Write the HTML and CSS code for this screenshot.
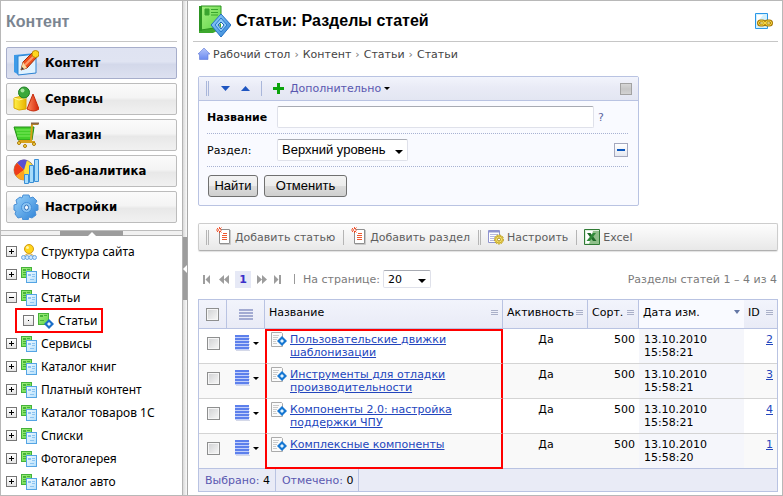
FILE: index.html
```html
<!DOCTYPE html>
<html lang="ru">
<head>
<meta charset="utf-8">
<title>Статьи: Разделы статей</title>
<link rel="stylesheet" href="styles.css">
</head>
<body>
<svg class="defs" aria-hidden="true">
  <defs>
    <linearGradient id="gGreen" x1="0" y1="0" x2="1" y2="1"><stop offset="0" stop-color="#a4ef7e"/><stop offset="1" stop-color="#5fd64a"/></linearGradient>
    <linearGradient id="gBlue" x1="0" y1="0" x2="1" y2="1"><stop offset="0" stop-color="#f2faff"/><stop offset="1" stop-color="#b4dffb"/></linearGradient>
    <linearGradient id="gSky" x1="0" y1="0" x2="1" y2="1"><stop offset="0" stop-color="#9bd4fb"/><stop offset="1" stop-color="#2b80d6"/></linearGradient>
    <linearGradient id="gHouse" x1="0" y1="0" x2="0" y2="1"><stop offset="0" stop-color="#b3c4fa"/><stop offset="1" stop-color="#6b8af0"/></linearGradient>
    <linearGradient id="gYellow" x1="0" y1="0" x2="1" y2="0"><stop offset="0" stop-color="#fff04a"/><stop offset="1" stop-color="#e8b400"/></linearGradient>
    <linearGradient id="gRed" x1="0" y1="0" x2="1" y2="0"><stop offset="0" stop-color="#ff8a5c"/><stop offset="1" stop-color="#d32408"/></linearGradient>
  </defs>
  <symbol id="pages" viewBox="0 0 16 16">
    <rect x=".5" y=".5" width="10" height="10" fill="url(#gGreen)" stroke="#45b23a"/>
    <path d="M2 2.500h3M2 3.500h3M6 2.500h3M2 5.500h3M2 7.500h3" stroke="#45b23a"/>
    <rect x="5.500" y="4.500" width="10" height="11" fill="url(#gBlue)" stroke="#55a5e4"/>
    <path d="M7 7.500h3M7 8.500h3M11 7.500h3M11 9.500h3M9 12.500h4" stroke="#8cc4f2"/>
  </symbol>
  <symbol id="page-gem" viewBox="0 0 16 16">
    <rect x=".5" y=".5" width="10" height="11" fill="url(#gGreen)" stroke="#45b23a"/>
    <path d="M2 2.500h3M2 3.500h3M6 2.500h3M2 7.500h4" stroke="#45b23a"/>
    <path d="M11 6l5 5-5 5-5-5z" fill="#1b6fc8"/><path d="M11 9l2 2-2 2-2-2z" fill="#e8f6ff"/>
  </symbol>
  <symbol id="doc-gem" viewBox="0 0 16 16">
    <path d="M.5 .5h10l1 1V14.500H.5z" fill="#fbfbfb" stroke="#ababab"/>
    <path d="M2 3.500h6M2 5.500h5M2 7.500h4M2 9.500h3M2 11.500h4" stroke="#cbcbcb"/>
    <path d="M11 4l5 5-5 5-5-5z" fill="#1677d2"/><path d="M11 7l2 2-2 2-2-2z" fill="#e2f4ff"/>
  </symbol>
  <symbol id="sitemap" viewBox="0 0 16 16">
    <circle cx="8" cy="5" r="4.500" fill="#ffd51c" stroke="#d39a10"/><circle cx="6.500" cy="3.500" r="1.500" fill="#fff6a8"/>
    <path d="M3 12l3-2h4l3 2" fill="none" stroke="#d9a838"/>
    <g fill="#cfe8ff" stroke="#6aa5e2"><circle cx="2.500" cy="13.500" r="2"/><circle cx="6.200" cy="13.500" r="2"/><circle cx="9.900" cy="13.500" r="2"/><circle cx="13.500" cy="13.500" r="2"/></g>
  </symbol>
  <symbol id="add-doc" viewBox="0 0 16 18">
    <path d="M3.500 2.500h10v14h-10z" fill="#fff" stroke="#8f8f8f"/><path d="M14.500 3v14.500H4" fill="none" stroke="#c9c9c9"/>
    <path d="M7 6.500h4M6 8.500h5M6 10.500h5M6 12.500h5" stroke="#f0582f"/>
    <path d="M3.500 0v6M0 3h6M1 1l4.500 4.500M5.500 .5L1 5" stroke="#f0431a" stroke-width=".9"/><circle cx="3.500" cy="3" r="1" fill="#fff"/>
  </symbol>
  <symbol id="menu" viewBox="0 0 15 16">
    <path d="M1 3.500h14M1 6.500h14M1 9.500h14M1 12.500h14M1 15.500h14" stroke="#d4d8e8"/>
    <path d="M0 1h14M0 4h14M0 7h14M0 10h14M0 13h14" stroke="currentColor" stroke-width="2"/>
    <path d="M0 2.500h14M0 5.500h14M0 8.500h14M0 11.500h14M0 14.500h14" stroke="#c3d0fa"/>
  </symbol>
  <symbol id="menu-off" viewBox="0 0 14 11">
    <path d="M0 1h14M0 4h14M0 7h14M0 10h14" stroke="#a3abd2" stroke-width="2"/>
  </symbol>
</svg>

<div class="app">
  <aside class="side">
    <h2 class="side-title">Контент</h2>
    <nav class="sections">
      <button class="section current"><svg class="i26" viewBox="0 0 26 26"><path d="M1 5l22-2v20l-17 2-5-3z" fill="#3d9be8"/><path d="M5 6l18-2v19L5 25z" fill="#dff2ff" stroke="#2f83d2"/><path d="M8 20l2-8L19 3l5 4-10 11z" fill="#f0501c" stroke="#9f2c0a"/><path d="M12 15l9-9" stroke="#ff9b6b" stroke-width="2"/><path d="M8 20l2-8 4 6z" fill="#f8d9a0"/><path d="M8 20l1-3 2 2z" fill="#333"/><circle cx="22.500" cy="4" r="3.500" fill="#ffd61e" stroke="#b98a04"/></svg>Контент</button>
      <button class="section"><svg class="i26" viewBox="0 0 26 26"><path d="M1 12l6-1.500 6 1.500v11l-7 1-5-2z" fill="url(#gYellow)" stroke="#d8a800"/><path d="M1 12l5 2 7-2" fill="none" stroke="#fff9a0"/><circle cx="11" cy="6.500" r="5.500" fill="#3aa83a" stroke="#1f7f24"/><circle cx="9.500" cy="4.500" r="2" fill="#a5e39c"/><path d="M20 8l6 15q-5 4-12 0z" fill="url(#gRed)" stroke="#c62b0c"/></svg>Сервисы</button>
      <button class="section"><svg class="i26" viewBox="0 0 26 26"><path d="M1 5h20l-2 13H5z" fill="#43cf2a" stroke="#238e16"/><path d="M3 8h17M4 11h15M4 14h15" stroke="#7eea5f"/><path d="M25 2h-6l-1 17H6" fill="none" stroke="#d79e16" stroke-width="2"/><path d="M18 1.500h8" stroke="#8a6540" stroke-width="2"/><path d="M6 20h16" stroke="#d8a21c" stroke-width="2"/><g fill="#ffe04a" stroke="#a8760c"><circle cx="12" cy="24" r="1.500"/><circle cx="21" cy="22" r="1.500"/><circle cx="6" cy="21" r="1.500"/></g></svg>Магазин</button>
      <button class="section"><svg class="i26" viewBox="0 0 26 26"><circle cx="11" cy="12" r="10" fill="#ffe03a" stroke="#a08970"/><path d="M11 12L4 5A10 10 0 0 1 14 2z" fill="#5a4fd0"/><path d="M11 12L4 5A10 10 0 0 0 3 18z" fill="#ef3c1a"/><path d="M11 12l-8 6a10 10 0 0 0 9 4z" fill="#ffa51e"/><path d="M11.500 16.500h4v9h-4zM16.500 7.500h4v17h-4zM21.500 1.500h4v22h-4z" fill="#a7dcfb" stroke="#3a8fd6"/></svg>Веб-аналитика</button>
      <button class="section"><svg class="i26" viewBox="0 0 26 26"><path d="M10 1h6l1 3 3-1 4 4-2 3 3 1v5l-3 1 1 4-4 3-3-1-1 3h-5l-1-3-4 1-3-4 1-3-2-1v-5l3-1-1-4 4-3 2 1z" fill="url(#gSky)" stroke="#4a90d6"/><circle cx="13.500" cy="13.500" r="5" fill="#8cc6f5" stroke="#4690da"/><ellipse cx="13.500" cy="13.500" rx="2" ry="2.500" fill="#f4f9ff" stroke="#3372b8"/></svg>Настройки</button>
    </nav>
    <div class="hsplit"><button class="hgrip" aria-label="Свернуть меню"><svg viewBox="0 0 8 4"><path d="M4 0l4 4H0z" fill="#fff"/></svg></button></div>
    <ul class="tree">
      <li><button class="exp plus-box" aria-label="Развернуть"></button><svg class="i16"><use href="#sitemap"/></svg><a href="#">Структура сайта</a></li>
      <li><button class="exp plus-box" aria-label="Развернуть"></button><svg class="i16"><use href="#pages"/></svg><a href="#">Новости</a></li>
      <li><button class="exp" aria-label="Свернуть"></button><svg class="i16"><use href="#pages"/></svg><a href="#">Статьи</a></li>
      <li class="marked"><button class="exp leaf" aria-label="Нет вложенных"></button><svg class="i16"><use href="#page-gem"/></svg><a href="#">Статьи</a></li>
      <li><button class="exp plus-box" aria-label="Развернуть"></button><svg class="i16"><use href="#pages"/></svg><a href="#">Сервисы</a></li>
      <li><button class="exp plus-box" aria-label="Развернуть"></button><svg class="i16"><use href="#pages"/></svg><a href="#">Каталог книг</a></li>
      <li><button class="exp plus-box" aria-label="Развернуть"></button><svg class="i16"><use href="#pages"/></svg><a href="#">Платный контент</a></li>
      <li><button class="exp plus-box" aria-label="Развернуть"></button><svg class="i16"><use href="#pages"/></svg><a href="#">Каталог товаров 1С</a></li>
      <li><button class="exp plus-box" aria-label="Развернуть"></button><svg class="i16"><use href="#pages"/></svg><a href="#">Списки</a></li>
      <li><button class="exp plus-box" aria-label="Развернуть"></button><svg class="i16"><use href="#pages"/></svg><a href="#">Фотогалерея</a></li>
      <li><button class="exp plus-box" aria-label="Развернуть"></button><svg class="i16"><use href="#pages"/></svg><a href="#">Каталог авто</a></li>
    </ul>
  </aside>

  <div class="vsplit"><button class="vgrip" aria-label="Скрыть панель"><svg viewBox="0 0 4 8"><path d="M4 0v8L0 4z" fill="#fff"/></svg></button></div>

  <main class="main">
    <header class="head">
      <svg class="i32" viewBox="0 0 32 32"><path d="M0 1h22v23l-8 4H0z" fill="#3da82e"/><path d="M2 1h20v21l-20 3z" fill="url(#gGreen)" stroke="#2c9421"/><path d="M0 1h3v25H0z" fill="#2c9421"/><path d="M6 4h4v6H6zM12 4.500h7M12 7.500h7M12 10h7" fill="#3aa52e" stroke="#3aa52e"/><path d="M22 9l10 11-10 12-10-12z" fill="url(#gSky)" stroke="#2270c4"/><path d="M22 13l6 7-6 7-6-7z" fill="#8fccfa" stroke="#2a78cc"/><path d="M22 17l3 3-3 4-3-4z" fill="#fff" stroke="#1f64b4"/><path d="M20 20l2-2v5z" fill="#37a52d"/></svg>
      <h1 class="title">Статьи: Разделы статей</h1>
      <a class="link-icon" href="#" aria-label="Ссылка на страницу"><svg class="i18" viewBox="0 0 18 18"><path d="M.5 1.500h12v15H.5z" fill="#d3f1fd" stroke="#2a97e8"/><path d="M2 3h6l-6 8z" fill="#fff"/><g fill="none" stroke="#a77806" stroke-width="3"><rect x="3.500" y="9" width="6" height="4" rx="2"/><rect x="10.500" y="9" width="6" height="4" rx="2"/></g><g fill="none" stroke="#ffe04a"><rect x="3.500" y="9" width="6" height="4" rx="2"/><rect x="10.500" y="9" width="6" height="4" rx="2"/><path d="M6 11h8"/></g></svg></a>
    </header>

    <nav class="crumbs">
      <svg class="home" viewBox="0 0 12 12"><path d="M6 0l6 6H10v5.500H1.500V6H0z" fill="url(#gHouse)" stroke="#5f78d6" stroke-width=".6"/></svg>
      <a href="#">Рабочий стол</a><span class="sep">›</span><a href="#">Контент</a><span class="sep">›</span><a href="#">Статьи</a><span class="sep">›</span><a href="#">Статьи</a>
    </nav>

    <form class="filter">
      <div class="filter-bar">
        <span class="grip"></span>
        <button type="button" class="bare down" aria-label="Вниз"><svg viewBox="0 0 9 5"><path d="M0 0h9L4.500 5z" fill="#1e55c0"/></svg></button>
        <button type="button" class="bare up" aria-label="Вверх"><svg viewBox="0 0 9 5"><path d="M0 5h9L4.500 0z" fill="#1e55c0"/></svg></button>
        <span class="bar"></span>
        <button type="button" class="bare more"><svg class="plus" viewBox="0 0 11 11"><path d="M4 0h3v4h4v3H7v4H4V7H0V4h4z" fill="#0ba30b"/></svg>Дополнительно<i class="caret"></i></button>
        <button type="button" class="square" aria-label="Свернуть фильтр"></button>
      </div>
      <div class="filter-body">
        <div class="field">
          <label class="label strong" for="name">Название</label>
          <input class="text" id="name" type="text"><a class="hint" href="#">?</a>
        </div>
        <div class="field">
          <label class="label" for="sec">Раздел:</label>
          <span class="pick wide"><select id="sec"><option>Верхний уровень</option></select></span>
          <button type="button" class="minus" aria-label="Убрать условие"></button>
        </div>
        <div class="actions"><button type="submit" class="btn find">Найти</button><button type="reset" class="btn cancel">Отменить</button></div>
      </div>
    </form>

    <div class="toolbar">
      <span class="grip gray"></span>
      <button class="bare tool"><svg class="add"><use href="#add-doc"/></svg>Добавить статью</button>
      <span class="bar gray"></span>
      <button class="bare tool"><svg class="add"><use href="#add-doc"/></svg>Добавить раздел</button>
      <span class="grip gray"></span>
      <button class="bare tool"><svg class="i16" viewBox="0 0 16 16"><path d="M.5 1.500h11v12H.5z" fill="#fff" stroke="#8f94cf"/><path d="M1 2.500h10" stroke="#8f94cf" stroke-width="2"/><path d="M2 5.500h8M2 7.500h8M2 9.500h6M2 11.500h5" stroke="#b6b9e0"/><circle cx="11" cy="10.500" r="4.500" fill="#f6e36a" stroke="#b29320" stroke-dasharray="2 1"/><circle cx="11" cy="10.500" r="3.500" fill="#f6e36a" stroke="#c9ab30"/><circle cx="11" cy="10.500" r="1.500" fill="#fff" stroke="#a8881c"/></svg>Настроить</button>
      <span class="bar gray"></span>
      <button class="bare tool"><svg class="i16" viewBox="0 0 16 16"><path d="M.5.500h15v15H.5z" fill="#dcefdc" stroke="#2f7a34"/><path d="M2 2h12v12H2z" fill="#fff"/><path d="M9 2h6v13H5z" fill="#8fbf8a"/><path d="M3 4h3.500l6 8H9z" fill="#1f6b28"/><path d="M12 4H9l-6.500 8H6z" fill="#2f8a38"/></svg>Excel</button>
    </div>

    <div class="pager">
      <svg class="pg" viewBox="0 0 8 9"><path d="M0 0h2v9H0zM7 0v9L2.500 4.500z"/></svg>
      <svg class="pg two" viewBox="0 0 10 9"><path d="M5 0v9L0 4.500zM10 0v9L5 4.500z"/></svg>
      <b class="now">1</b>
      <svg class="pg two" viewBox="0 0 10 9"><path d="M5 0v9l5-4.500zM0 0v9l5-4.500z"/></svg>
      <svg class="pg" viewBox="0 0 8 9"><path d="M6 0h2v9H6zM1 0v9l4.500-4.500z"/></svg>
      <span class="pipe"></span>
      <label for="per">На странице:</label>
      <span class="pick small"><select id="per"><option>20</option></select></span>
      <span class="total">Разделы статей 1 – 4 из 4</span>
    </div>

    <table class="grid">
      <colgroup><col class="c1"><col class="c2"><col><col class="c4"><col class="c5"><col class="c6"><col class="c7"></colgroup>
      <thead>
        <tr>
          <th class="mid"><input type="checkbox" aria-label="Выбрать все"></th>
          <th class="mid"><svg class="dim"><use href="#menu-off"/></svg></th>
          <th><div class="th">Название<i class="lines"></i></div></th>
          <th><div class="th">Активность<i class="lines"></i></div></th>
          <th><div class="th">Сорт.<i class="lines"></i></div></th>
          <th class="sorted"><div class="th">Дата изм.<i class="desc"></i></div></th>
          <th class="id"><div class="th">ID<i class="lines"></i></div></th>
        </tr>
      </thead>
      <tbody>
        <tr><td class="mid"><input type="checkbox" aria-label="Строка 2"></td><td><button class="bare acts" aria-label="Действия"><svg class="menu"><use href="#menu"/></svg><i class="caret"></i></button></td><td class="name"><div class="item"><svg class="i16"><use href="#doc-gem"/></svg><a href="#">Пользовательские движки шаблонизации</a></div></td><td class="yes">Да</td><td class="num">500</td><td class="date">13.10.2010 15:58:21</td><td class="num"><a href="#">2</a></td></tr>
        <tr><td class="mid"><input type="checkbox" aria-label="Строка 3"></td><td><button class="bare acts" aria-label="Действия"><svg class="menu"><use href="#menu"/></svg><i class="caret"></i></button></td><td class="name"><div class="item"><svg class="i16"><use href="#doc-gem"/></svg><a href="#">Инструменты для отладки производительности</a></div></td><td class="yes">Да</td><td class="num">500</td><td class="date">13.10.2010 15:58:21</td><td class="num"><a href="#">3</a></td></tr>
        <tr><td class="mid"><input type="checkbox" aria-label="Строка 4"></td><td><button class="bare acts" aria-label="Действия"><svg class="menu"><use href="#menu"/></svg><i class="caret"></i></button></td><td class="name"><div class="item"><svg class="i16"><use href="#doc-gem"/></svg><a href="#">Компоненты 2.0: настройка поддержки ЧПУ</a></div></td><td class="yes">Да</td><td class="num">500</td><td class="date">13.10.2010 15:58:21</td><td class="num"><a href="#">4</a></td></tr>
        <tr><td class="mid"><input type="checkbox" aria-label="Строка 1"></td><td><button class="bare acts" aria-label="Действия"><svg class="menu"><use href="#menu"/></svg><i class="caret"></i></button></td><td class="name"><div class="item"><svg class="i16"><use href="#doc-gem"/></svg><a href="#">Комплексные компоненты</a></div></td><td class="yes">Да</td><td class="num">500</td><td class="date">13.10.2010 15:58:20</td><td class="num"><a href="#">1</a></td></tr>
      </tbody>
      <tfoot>
        <tr><td colspan="7"><div class="sums"><span>Выбрано: <b>4</b></span><span>Отмечено: <b>0</b></span></div></td></tr>
      </tfoot>
    </table>
  </main>
</div>
</body>
</html>
```
FILE: styles.css
```css
* { box-sizing: border-box; }
body { margin: 0; background: #fff; color: #000; font: 11px/13px "DejaVu Sans", Verdana, sans-serif; }
h1, h2, ul { margin: 0; padding: 0; }
button, input, select { font: inherit; color: inherit; margin: 0; padding: 0; border-radius: 0; }
svg { display: block; flex: none; }
.defs { position: absolute; width: 0; height: 0; }
.i16 { width: 16px; height: 16px; }
.i18 { width: 18px; height: 18px; }
.i26 { width: 26px; height: 26px; }
.i32 { width: 32px; height: 32px; }

.app { display: grid; grid-template-columns: 181px 6px minmax(0, 1fr); min-height: 100vh; border: 1px solid #b8b8b8; }

/* Sidebar */
.side { min-width: 0; }
.side-title { height: 41px; margin: 0 5px; padding-top: 11px; border-bottom: 1px solid #c6c6c6; font: bold 16px/20px "Liberation Sans", Arial, sans-serif; color: #7b8591; }
.sections { display: grid; gap: 4px; padding: 5px 5px 7px 5px; }
.section { display: flex; align-items: center; gap: 6px; height: 32px; padding: 0 6px; border: 1px solid #bcbcbc; border-radius: 2px; background: linear-gradient(#fbfbfb, #f4f4f4 45%, #e8e8e8 55%, #f1f1f1); font: bold 13px/16px "DejaVu Sans Condensed", Tahoma, sans-serif; text-align: left; }
.section.current { border-color: #a7aecb; background: linear-gradient(#dfe3f2, #e0e4f2 45%, #d3d8ea 55%, #dde1f0); }
.hsplit { height: 6px; border-top: 1px solid #bdbdbd; border-bottom: 1px solid #b0b0b0; background: #f1f1f1; display: flex; justify-content: center; }
.hgrip { display: flex; justify-content: center; align-items: center; width: 63px; height: 5px; border: 0; background: #9d9d9d; }
.hgrip svg { width: 8px; height: 4px; }
.tree { list-style: none; padding-top: 4px; }
.tree li { display: flex; align-items: center; height: 23px; padding-left: 5px; font: 12px/16px "Noto Sans", Tahoma, sans-serif; }
.tree a { color: #000; text-decoration: none; margin-left: 4px; white-space: nowrap; }
.tree .marked { width: 88px; height: 25px; margin: -1px 0 -1px 14px; padding-left: 6px; border: 2px solid #f00; }
.exp {
  width: 11px; height: 11px; margin-right: 4px; border: 1px solid #767676;
  background: linear-gradient(#000, #000) center / 5px 1px no-repeat, linear-gradient(#fff, #e4e4e4);
}
.plus-box { background: linear-gradient(#000, #000) center / 5px 1px no-repeat, linear-gradient(#000, #000) center / 1px 5px no-repeat, linear-gradient(#fff, #e4e4e4); }
.leaf { background: linear-gradient(#000, #000) center / 1px 1px no-repeat, linear-gradient(#fff, #e4e4e4); }

.vsplit { display: flex; align-items: flex-start; padding-top: 236px; border-left: 1px solid #b4b4b4; border-right: 1px solid #a9a9a9; background: linear-gradient(90deg, #d9d9d9, #fafafa); }
.vgrip { display: flex; align-items: center; justify-content: center; width: 6px; height: 63px; border: 0; background: #9d9d9d; }
.vgrip svg { width: 4px; height: 8px; }

/* Main area */
.main { padding: 0 4px 3px 5px; min-width: 0; }
.head { display: flex; align-items: center; gap: 5px; height: 41px; padding: 0 5px 1px 6px; border-bottom: 1px solid #c6c6c6; }
.title { flex: 1; font: bold 16px/20px "Liberation Sans", Arial, sans-serif; }
.crumbs { display: flex; align-items: center; height: 24px; padding-left: 5px; }
.crumbs a { color: #444; text-decoration: none; }
.home { width: 12px; height: 12px; margin-right: 3px; }
.sep { margin: 0 4px; color: #777; }

.bare { border: 0; background: none; }
.grip { width: 3px; height: 15px; border: solid #a9b6da; border-width: 0 1px; }
.bar { width: 1px; height: 15px; background: #a9b6da; }
.grip.gray { border-color: #b5b5b5; }
.bar.gray { background: #b5b5b5; }
.caret { display: inline-block; flex: none; border: solid transparent; border-width: 3px 3px 0; border-top-color: #000; }

.filter { max-width: 441px; margin: 10px 0 0 5px; border: 1px solid #b9c3e2; border-radius: 2px; background: #f9faff; }
.filter-bar { display: flex; align-items: center; height: 24px; padding: 0 6px 0 7px; border-bottom: 1px solid #b9c3e2; background: linear-gradient(#f2f4fc, #e9ebf6 45%, #e3e6f2); }
.down, .up { display: flex; }
.down { margin-left: 12px; }
.up { margin: 0 11px; }
.down svg, .up svg { width: 9px; height: 5px; }
.more { display: flex; align-items: center; margin-left: 11px; color: #5a58b0; }
.more .caret { margin-left: 3px; }
.plus { width: 11px; height: 11px; margin-right: 6px; }
.square { width: 12px; height: 12px; margin-left: auto; border: 1px solid #a2a2a2; background: linear-gradient(#d6d6d6, #c6c6c6 50%, #d2d2d2); }
.filter-body { padding: 0 10px 8px 8px; }
.field { display: flex; align-items: center; height: 33px; border-bottom: 1px dotted #a8b2d2; }
.label { width: 70px; flex: none; }
.label.strong { font-weight: bold; }
.text, .pick select { border: 1px solid #dfe1ea; border-top-color: #a8abb3; background: #fff; }
.text { flex: 1; min-width: 0; max-width: 317px; height: 22px; padding: 0 4px; border-radius: 2px; }
.hint { margin-left: 4px; color: #5f66a0; text-decoration: none; }
.pick { position: relative; display: block; }
.pick select { display: block; width: 100%; height: 100%; appearance: none; border-radius: 2px; }
.pick::after { content: ""; position: absolute; right: 5px; top: 50%; border: solid transparent; border-width: 4px 4px 0; border-top-color: #000; pointer-events: none; }
.wide { width: 131px; height: 22px; font: 13px/18px "Liberation Sans", Arial, sans-serif; }
.wide select { padding-left: 4px; }
.minus { display: flex; align-items: center; justify-content: center; width: 14px; height: 14px; margin-left: auto; border: 1px solid #a5a8bd; background: linear-gradient(#fff, #e6e8f0); }
.minus::before { content: ""; width: 8px; height: 2px; background: #0b56bd; }
.actions { display: flex; gap: 6px; padding-top: 8px; margin-left: 1px; }
.btn { height: 22px; border: 1px solid #707070; border-radius: 3px; background: linear-gradient(#f3f3f3, #ececec 49%, #dcdcdc 50%, #cfcfcf); font: 13px/18px "Liberation Sans", Arial, sans-serif; }
.find { width: 50px; }
.cancel { width: 83px; }

.toolbar { display: flex; align-items: center; height: 28px; margin: 17px 0 0 5px; padding-left: 7px; border: 1px solid #cdcdcd; border-bottom-color: #b0b0b0; border-radius: 2px; box-shadow: 0 1px 1px #e2e2e2; background: linear-gradient(#fdfdfd, #f4f4f4 45%, #e8e8e8); color: #5e5e5e; }
.tool { display: flex; align-items: center; gap: 3px; margin: 0 8px 0 7px; white-space: nowrap; }
.add { width: 16px; height: 18px; margin-top: -2px; }

.pager { display: flex; align-items: center; height: 20px; margin: 18px 1px 10px 10px; color: #7b7b7b; }
.pg { width: 8px; height: 9px; fill: #9d9d9d; margin-right: 8px; }
.pg.two { width: 10px; margin-right: 6px; }
.now { width: 16px; height: 17px; margin-right: 6px; background: #e6e9f6; color: #3b2fc9; text-align: center; line-height: 17px; }
.pipe { width: 1px; height: 10px; margin: 0 8px 0 5px; background: #999; }
.small { width: 48px; height: 18px; margin-left: 3px; color: #000; }
.small select { padding-left: 4px; }
.total { margin-left: auto; }

/* Table */
.grid { width: calc(100% - 5px); margin-left: 5px; table-layout: fixed; border-collapse: separate; border-spacing: 0; border: 1px solid #b9c3e2; }
.c1 { width: 28px; } .c2 { width: 38px; } .c4 { width: 85px; } .c5 { width: 51px; } .c6 { width: 105px; } .c7 { width: 33px; }
.grid th { height: 29px; padding: 0 4px; border-right: 1px solid #b9c3e2; border-bottom: 1px solid #b9c3e2; background: linear-gradient(#f2f4fc, #e9ebf6); font-weight: normal; text-align: left; }
.grid th:last-child, .grid th.sorted { border-right: 0; }
.grid th.sorted { background: #f9faff; }
.th { display: flex; align-items: center; justify-content: space-between; height: 14px; margin-bottom: 4px; white-space: nowrap; }
.lines { width: 7px; height: 5px; border: solid #aab0c8; border-width: 1px 0; background: linear-gradient(#aab0c8, #aab0c8) 0 1px / 7px 1px no-repeat; }
.desc { border: solid transparent; border-width: 4px 3px 0; border-top-color: #6477a5; }
.grid .mid { padding: 0; vertical-align: middle; text-align: center; }
.grid input { display: block; appearance: none; width: 13px; height: 13px; margin: 0 auto; border: 1px solid #8e8f8f; outline: 1px solid #f6f6f6; outline-offset: -2px; background: linear-gradient(135deg, #cfd0d2, #f8f8f8); }
.grid td { height: 35px; padding: 4px 4px 0 5px; border-bottom: 1px solid #d4d4d4; vertical-align: top; }
.grid tbody td.mid { padding: 0; vertical-align: top; }
.grid td.mid input { margin-top: 8px; }
.grid tbody tr:nth-child(even) td { background: #f9f9f9; }
.grid tbody tr:last-child td { border-bottom-color: #b9c3e2; }
.grid tbody tr:nth-child(n) td.date { background: #f5f6fb; }
.menu { width: 15px; height: 16px; color: #5d80ec; }
.dim { width: 14px; height: 11px; margin: 0 auto; }
.acts { display: flex; align-items: center; gap: 3px; margin: 2px 0 0 3px; }
.grid tbody td.name { padding: 3px 3px 0 4px; border-left: 2px solid #f00; border-right: 2px solid #f00; }
.grid tbody tr:first-child td.name { padding-top: 1px; border-top: 2px solid #f00; }
.grid tbody tr:last-child td.name { border-bottom: 2px solid #f00; }
.item { display: flex; gap: 3px; max-width: 204px; }
.item a { padding-top: 1px; }
.grid a { color: #2346bd; }
.yes { text-align: center; }
.num { text-align: right; }
.grid td.date { padding-right: 20px; }
.grid tfoot td { height: 22px; padding: 0; border: 0; background: #e9ebf6; }
.sums { display: flex; color: #5a58b0; }
.sums span { padding: 5px 5px 4px 6px; border-right: 1px solid #b9c3e2; }
.sums b { font-weight: normal; color: #000; }
```
